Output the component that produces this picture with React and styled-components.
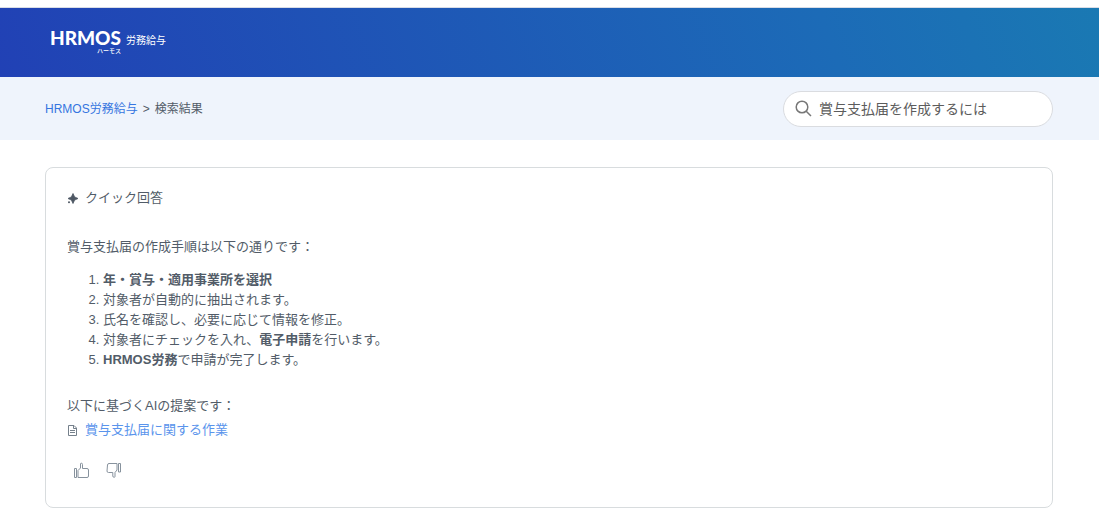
import { useState } from "react";
import styled, { createGlobalStyle } from "styled-components";

const GlobalStyle = createGlobalStyle`
  * {
    box-sizing: border-box;
  }
  body {
    margin: 0;
    background: #fff;
    color: #525c68;
    font-family: "Liberation Sans", "Noto Sans CJK JP", sans-serif;
    font-size: 13px;
    line-height: 20px;
  }
`;

const TopLine = styled.div`
  height: 8px;
  border-bottom: 1px solid #d9dde6;
`;

const Header = styled.header`
  display: flex;
  height: 69px;
  padding: 20px 50px;
  background: linear-gradient(70deg, #2141b5 0%, #1c6bb7 75%, #1a79b3 100%);
`;

const Logo = styled.a`
  display: flex;
  align-items: flex-start;
  gap: 5px;
  color: #fff;
  text-decoration: none;
`;

const Brand = styled.span`
  display: flex;
  flex-direction: column;
  align-items: flex-end;
  font-family: Lato, sans-serif;
  font-size: 19px;
  font-weight: 900;
  line-height: 20px;
`;

const BrandKana = styled.span`
  font-family: "Noto Sans CJK JP", sans-serif;
  font-size: 6px;
  font-weight: 500;
  line-height: 6px;
`;

const Product = styled.span`
  font-family: "Noto Sans CJK JP", sans-serif;
  font-size: 10px;
  line-height: 24px;
`;

const SubNav = styled.div`
  display: flex;
  align-items: center;
  justify-content: space-between;
  height: 63px;
  padding: 0 46px 0 45px;
  background: #eff4fc;
`;

const Breadcrumbs = styled.nav`
  display: flex;
  gap: 5px;
  font-size: 12px;
`;

const Link = styled.a`
  color: ${(props) => (props.$soft ? "#5a94ec" : "#3575e0")};
  text-decoration: none;
`;

const SearchBox = styled.label`
  display: flex;
  align-items: center;
  gap: 7px;
  width: 270px;
  height: 36px;
  padding: 0 11px;
  border: 1px solid #dadce0;
  border-radius: 18px;
  background: #fff;
`;

const SearchInput = styled.input`
  flex: 1;
  min-width: 0;
  padding: 0;
  border: 0;
  outline: 0;
  background: none;
  color: #5c5c5c;
  font-family: inherit;
  font-size: 14px;
  line-height: 20px;
`;

const Card = styled.section`
  margin: 27px 46px 20px 45px;
  padding: 20px 21px 29px;
  border: 1px solid #d8dcde;
  border-radius: 8px;
`;

const IconRow = styled.div`
  display: flex;
  align-items: center;
  gap: 6px;
`;

const Title = styled.h2`
  margin: 0;
  font-size: 13px;
  font-weight: 400;
`;

const Intro = styled.p`
  margin: 29px 0 13px;
`;

const Steps = styled.ol`
  margin: 0;
  padding-left: 36px;
`;

const Source = styled.p`
  margin: 26px 0 4px;
`;

const Feedback = styled.div`
  display: flex;
  gap: 17px;
  margin-top: 22px;
  padding-left: 6px;
`;

const FeedbackButton = styled.button`
  display: flex;
  padding: 0;
  border: 0;
  background: none;
  color: #87929d;
  cursor: pointer;
`;

const SearchIcon = () => (
  <svg width="17" height="17" viewBox="0 0 17 17" fill="none" stroke="#777" strokeWidth="1.5" aria-hidden="true">
    <circle cx="7" cy="7" r="5.8" />
    <path d="M11.2 11.2L16 16" />
  </svg>
);

const SparkIcon = () => (
  <svg width="12" height="12" viewBox="0 0 12 12" fill="#4d5763" aria-hidden="true">
    <path d="M6 1.5L7.6 4.9L11 6.5L7.6 8.1L6 11.5L4.4 8.1L1 6.5L4.4 4.9Z" stroke="#4d5763" strokeWidth="0.8" strokeLinejoin="round" />
    <circle cx="2" cy="10.2" r="1" />
  </svg>
);

const FileIcon = () => (
  <svg width="12" height="12" viewBox="0 0 12 12" fill="none" stroke="#75808b" aria-hidden="true">
    <path d="M1.5 1.5H7L9.5 4V11.5H1.5Z" />
    <path d="M6.5 1.5V4.5H9.5M3 6.5H8M3 8.5H8" />
  </svg>
);

const ThumbUpIcon = () => (
  <svg width="16" height="16" viewBox="0 0 16 16" fill="none" stroke="currentColor" strokeLinejoin="round" aria-hidden="true">
    <path d="M1.5 6.5H3.5V15.5H1.5Z" />
    <path d="M5 15.5V8.5L7.5 6V2Q7.5 1.2 8.3 1.2Q9.5 1.2 9.5 2.5V6.5H14Q15.5 6.5 15.5 8V14Q15.5 15.5 14 15.5Z" />
  </svg>
);

const ThumbDownIcon = () => (
  <svg width="16" height="16" viewBox="0 0 16 16" fill="none" stroke="currentColor" strokeLinejoin="round" aria-hidden="true">
    <path d="M12.5 1.5H14.5V10H12.5Z" />
    <path d="M11 1.5V8L9 10.5V14.5Q9 15.3 8.2 15.3Q6.8 15.3 6.8 14V10.5H2.5Q1 10.5 1 9L1.5 3Q1.6 1.5 3 1.5Z" />
  </svg>
);

const App = () => {
  const [query, setQuery] = useState("賞与支払届を作成するには");

  return (
    <>
      <GlobalStyle />
      <TopLine />
      <Header>
        <Logo href="#">
          <Brand>
            HRMOS
            <BrandKana>ハーモス</BrandKana>
          </Brand>
          <Product>労務給与</Product>
        </Logo>
      </Header>
      <SubNav>
        <Breadcrumbs>
          <Link href="#">HRMOS労務給与</Link>
          <span>&gt;</span>
          <span>検索結果</span>
        </Breadcrumbs>
        <SearchBox>
          <SearchIcon />
          <SearchInput
            aria-label="検索"
            value={query}
            onChange={(e) => setQuery(e.target.value)}
          />
        </SearchBox>
      </SubNav>
      <Card>
        <IconRow>
          <SparkIcon />
          <Title>クイック回答</Title>
        </IconRow>
        <Intro>賞与支払届の作成手順は以下の通りです：</Intro>
        <Steps>
          <li>
            <strong>年・賞与・適用事業所を選択</strong>
          </li>
          <li>対象者が自動的に抽出されます。</li>
          <li>氏名を確認し、必要に応じて情報を修正。</li>
          <li>
            対象者にチェックを入れ、<strong>電子申請</strong>を行います。
          </li>
          <li>
            <strong>HRMOS労務</strong>で申請が完了します。
          </li>
        </Steps>
        <Source>以下に基づくAIの提案です：</Source>
        <IconRow>
          <FileIcon />
          <Link href="#" $soft>
            賞与支払届に関する作業
          </Link>
        </IconRow>
        <Feedback>
          <FeedbackButton aria-label="役に立った">
            <ThumbUpIcon />
          </FeedbackButton>
          <FeedbackButton aria-label="役に立たなかった">
            <ThumbDownIcon />
          </FeedbackButton>
        </Feedback>
      </Card>
    </>
  );
};

export default App;
